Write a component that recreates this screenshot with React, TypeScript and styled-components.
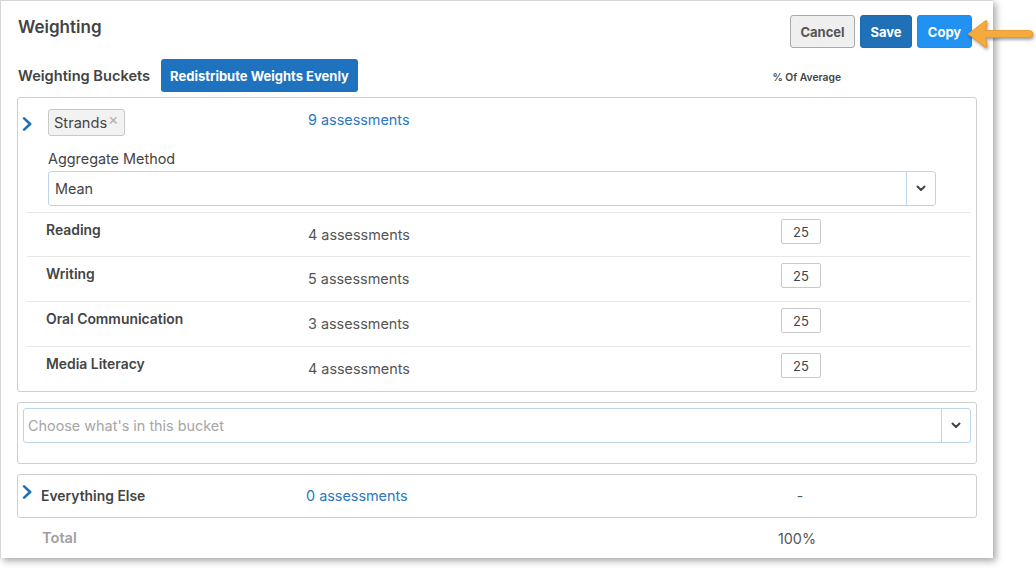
import React from "react";
import styled, { createGlobalStyle } from "styled-components";

const GlobalStyle = createGlobalStyle`
  html, body {
    margin: 0;
    padding: 0;
    background: #fff;
  }
  body {
    font-family: Inter, "Liberation Sans", Arial, sans-serif;
    color: #444;
  }
  * {
    box-sizing: border-box;
  }
`;

const Page = styled.div`
  position: relative;
  width: 1036px;
  height: 570px;
  overflow: hidden;
`;

const Modal = styled.div`
  width: 993px;
  height: 558px;
  background: #fff;
  border-left: 1px solid #d6d6d6;
  border-top: 1px solid #d6d6d6;
  box-shadow: 3px 3px 7px rgba(0, 0, 0, 0.35);
  padding: 14px 16px 0 16px;
  display: flex;
  flex-direction: column;
`;

const Header = styled.div`
  display: flex;
  justify-content: space-between;
  align-items: flex-start;
  padding-right: 5px;
`;

const Title = styled.h1`
  margin: 2px 0 0 1px;
  font-size: 17px;
  line-height: 20px;
  font-weight: 600;
  color: #444;
`;

const Actions = styled.div`
  display: flex;
  gap: 5px;
`;

const Button = styled.button<{ $variant: "default" | "primary" | "info"; $width: number }>`
  width: ${(p) => p.$width}px;
  height: 33px;
  padding: 0;
  border-radius: 3px;
  font-family: inherit;
  font-size: 13px;
  font-weight: 700;
  cursor: pointer;
  border: 1px solid
    ${(p) =>
      p.$variant === "default"
        ? "#a9a9a9"
        : p.$variant === "primary"
        ? "#1d6cb0"
        : "#1e8cec"};
  background: ${(p) =>
    p.$variant === "default"
      ? "#efefef"
      : p.$variant === "primary"
      ? "#1f70b7"
      : "#2192f1"};
  color: ${(p) => (p.$variant === "default" ? "#555" : "#fff")};
`;

const Toolbar = styled.div`
  display: flex;
  align-items: center;
  margin-top: 11px;
  height: 33px;
`;

const SectionLabel = styled.span`
  font-size: 14.6px;
  font-weight: 600;
  color: #444;
  margin-left: 1px;
  width: 143px;
`;

const RedistributeButton = styled.button`
  height: 33px;
  width: 197px;
  padding: 0;
  border: none;
  border-radius: 3px;
  background: #1f72bd;
  color: #fff;
  font-family: inherit;
  font-size: 13px;
  font-weight: 700;
`;

const ColumnHeading = styled.span`
  margin-left: auto;
  margin-right: 136px;
  font-size: 10.3px;
  font-weight: 600;
  color: #444;
  padding-top: 2px;
`;

const Bucket = styled.div<{ $pad?: string }>`
  border: 1px solid #cfcfcf;
  border-radius: 3px;
  background: #fff;
  padding: ${(p) => p.$pad || "0"};
`;

const BucketList = styled.div`
  display: flex;
  flex-direction: column;
  gap: 10px;
  margin-top: 5px;
`;

const BucketHead = styled.div`
  display: flex;
  align-items: flex-start;
  padding: 11px 0 0 4px;
`;

const Chevron = styled.span<{ $width: number; $top: number }>`
  width: ${(p) => p.$width}px;
  flex-shrink: 0;
  display: flex;
  padding-top: ${(p) => p.$top}px;
  color: #1f6fb5;
`;

const Chip = styled.span`
  display: inline-flex;
  align-items: center;
  height: 27px;
  padding: 0 5px;
  background: #f2f2f2;
  border: 1px solid #c8c8c8;
  border-radius: 3px;
  font-size: 14.6px;
  color: #444;
`;

const ChipClose = styled.span`
  color: #b0b0b0;
  font-size: 16px;
  margin-left: 1px;
  margin-top: -7px;
`;

const LinkText = styled.a<{ $offset?: number }>`
  display: block;
  color: #2a78bf;
  font-size: 14.4px;
  text-decoration: none;
  line-height: 18px;
  margin-top: ${(p) => p.$offset ?? 0}px;
`;

const AssessCol = styled.div<{ $width: number }>`
  width: ${(p) => p.$width}px;
  flex-shrink: 0;
`;

const MethodBlock = styled.div`
  padding: 14px 40px 0 30px;
`;

const FieldLabel = styled.div`
  font-size: 14.4px;
  color: #444;
  line-height: 18px;
  margin-bottom: 3px;
`;

const Select = styled.div<{ $placeholder?: boolean }>`
  display: flex;
  align-items: center;
  height: 35px;
  border: 1px solid #bcd5ea;
  border-radius: 3px;
  font-size: 14.4px;
  color: ${(p) => (p.$placeholder ? "#a6a6a6" : "#444")};
`;

const SelectValue = styled.span<{ $inset: number }>`
  flex: 1;
  padding-left: ${(p) => p.$inset}px;
`;

const SelectCaret = styled.span`
  width: 29px;
  height: 100%;
  border-left: 1px solid #bcd5ea;
  display: flex;
  align-items: center;
  justify-content: center;
  color: #444;
`;

const Rows = styled.div`
  margin: 6px 6px 0 9px;
`;

const Row = styled.div`
  display: flex;
  align-items: flex-start;
  height: 45px;
  border-top: 1px solid #e6e6e6;
  padding-left: 19px;

  &:first-child {
    height: 44px;
  }
`;

const RowLabel = styled.div`
  width: 262px;
  flex-shrink: 0;
  font-size: 13.9px;
  font-weight: 600;
  color: #444;
  line-height: 18px;
  margin-top: 8px;
`;

const RowCount = styled.div`
  width: 473px;
  flex-shrink: 0;
  font-size: 14.4px;
  color: #555;
  line-height: 18px;
  margin-top: 13px;
`;

const WeightInput = styled.input`
  width: 40px;
  height: 25px;
  margin-top: 6px;
  border: 1px solid #c9c9c9;
  border-radius: 2px;
  text-align: center;
  font-family: inherit;
  font-size: 13px;
  color: #444;
  padding: 0;
`;

const OtherRow = styled.div`
  display: flex;
  align-items: flex-start;
  height: 42px;
  padding-left: 4px;
`;

const OtherLabel = styled.div`
  width: 265px;
  flex-shrink: 0;
  font-size: 13.9px;
  font-weight: 600;
  color: #444;
  line-height: 18px;
  margin-top: 12px;
`;

const Dash = styled.div`
  width: 40px;
  text-align: center;
  margin-top: 12px;
  font-size: 14px;
  line-height: 18px;
  color: #555;
`;

const TotalRow = styled.div`
  display: flex;
  align-items: center;
  height: 40px;
  padding-left: 25px;
`;

const TotalLabel = styled.div`
  width: 731px;
  font-size: 14.6px;
  font-weight: 600;
  color: #a0a0a0;
`;

const TotalValue = styled.div`
  width: 48px;
  text-align: center;
  font-size: 14.4px;
  color: #555;
`;

const Pointer = styled.svg`
  position: absolute;
  left: 966px;
  top: 16px;
  filter: drop-shadow(1px 2px 1.5px rgba(0, 0, 0, 0.35));
`;

const ChevronRight = ({ size = 12 }: { size?: number }) => (
  <svg width={size * 0.75} height={size} viewBox="0 0 9 12">
    <path
      d="M1.8 1.2 L7 6 L1.8 10.8"
      fill="none"
      stroke="currentColor"
      strokeWidth="2.2"
      strokeLinecap="round"
      strokeLinejoin="round"
    />
  </svg>
);

const ChevronDown = () => (
  <svg width="10" height="7" viewBox="0 0 10 7">
    <path
      d="M1.5 1.5 L5 5 L8.5 1.5"
      fill="none"
      stroke="currentColor"
      strokeWidth="2"
      strokeLinecap="round"
      strokeLinejoin="round"
    />
  </svg>
);

const strands = [
  { name: "Reading", count: 4, weight: 25 },
  { name: "Writing", count: 5, weight: 25 },
  { name: "Oral Communication", count: 3, weight: 25 },
  { name: "Media Literacy", count: 4, weight: 25 },
];

export default function App() {
  return (
    <Page>
      <GlobalStyle />
      <Modal>
        <Header>
          <Title>Weighting</Title>
          <Actions>
            <Button $variant="default" $width={65}>Cancel</Button>
            <Button $variant="primary" $width={52}>Save</Button>
            <Button $variant="info" $width={55}>Copy</Button>
          </Actions>
        </Header>

        <Toolbar>
          <SectionLabel>Weighting Buckets</SectionLabel>
          <RedistributeButton>Redistribute Weights Evenly</RedistributeButton>
          <ColumnHeading>% Of Average</ColumnHeading>
        </Toolbar>

        <BucketList>
          <Bucket>
            <BucketHead>
              <Chevron $width={26} $top={8}>
                <ChevronRight size={14} />
              </Chevron>
              <AssessCol $width={260}>
                <Chip>
                  Strands<ChipClose>×</ChipClose>
                </Chip>
              </AssessCol>
              <LinkText href="#" $offset={2}>
                9 assessments
              </LinkText>
            </BucketHead>
            <MethodBlock>
              <FieldLabel>Aggregate Method</FieldLabel>
              <Select>
                <SelectValue $inset={6}>Mean</SelectValue>
                <SelectCaret>
                  <ChevronDown />
                </SelectCaret>
              </Select>
            </MethodBlock>
            <Rows>
              {strands.map((s) => (
                <Row key={s.name}>
                  <RowLabel>{s.name}</RowLabel>
                  <RowCount>{s.count} assessments</RowCount>
                  <WeightInput defaultValue={s.weight} />
                </Row>
              ))}
            </Rows>
          </Bucket>

          <Bucket $pad="5px 5px 20px 5px">
            <Select $placeholder>
              <SelectValue $inset={4}>Choose what's in this bucket</SelectValue>
              <SelectCaret>
                <ChevronDown />
              </SelectCaret>
            </Select>
          </Bucket>

          <Bucket>
            <OtherRow>
              <Chevron $width={19} $top={10}>
                <ChevronRight size={14} />
              </Chevron>
              <OtherLabel>Everything Else</OtherLabel>
              <AssessCol $width={474}>
                <LinkText href="#" $offset={12}>
                  0 assessments
                </LinkText>
              </AssessCol>
              <Dash>-</Dash>
            </OtherRow>
          </Bucket>
        </BucketList>

        <TotalRow>
          <TotalLabel>Total</TotalLabel>
          <TotalValue>100%</TotalValue>
        </TotalRow>
      </Modal>

      <Pointer width="70" height="36" viewBox="0 0 70 36">
        <path
          d="M2 18 L19 5 Q21.5 3.8 21 6.5 L19.5 14.5 L63 14.5 Q67 14.5 67 18 Q67 21.5 63 21.5 L19.5 21.5 L21 29.5 Q21.5 32.2 19 31 Z"
          fill="#f6a93c"
          stroke="#e39426"
          strokeWidth="0.8"
          strokeLinejoin="round"
        />
      </Pointer>
    </Page>
  );
}
